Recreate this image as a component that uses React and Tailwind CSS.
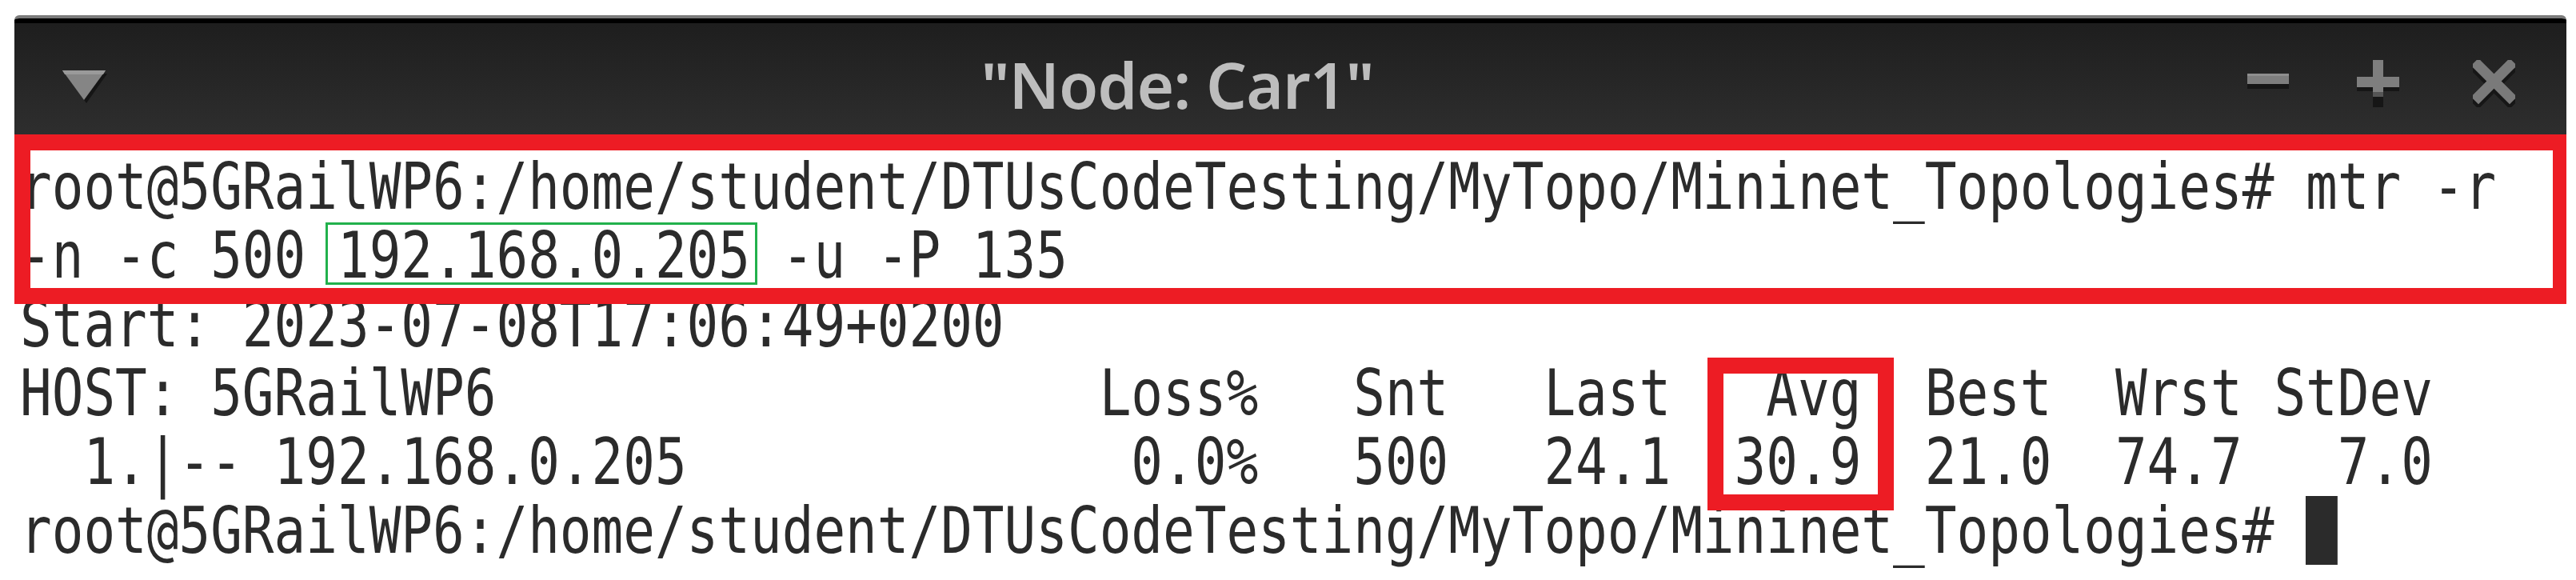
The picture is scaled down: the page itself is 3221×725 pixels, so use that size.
import React from 'react';

const prompt = 'root@5GRailWP6:/home/student/DTUsCodeTesting/MyTopo/Mininet_Topologies#';

const lines = [
  `${prompt} mtr -r`,
  '-n -c 500 192.168.0.205 -u -P 135',
  'Start: 2023-07-08T17:06:49+0200',
  'HOST: 5GRailWP6'.padEnd(34) + 'Loss%   Snt   Last   Avg  Best  Wrst StDev',
  '  1.|-- 192.168.0.205'.padEnd(35) + '0.0%   500   24.1  30.9  21.0  74.7   7.0',
];

const MenuArrow = () => (
  <svg width="56" height="41" viewBox="0 0 56 41" className="mt-[8px]">
    <polygon points="4,4 56,4 30,41" fill="#151515" />
    <polygon points="0,0 54,0 27,37" fill="#858585" />
    <polygon points="0,0 54,0 51,5 3,5" fill="#9a9a9a" />
  </svg>
);

const Minimize = () => (
  <svg width="52" height="19" viewBox="0 0 52 19" className="mt-[-6px]">
    <rect x="0" y="0" width="52" height="13" fill="#7e7e7e" />
    <rect x="0" y="0" width="52" height="3" fill="#8e8e8e" />
    <rect x="0" y="13" width="52" height="6" fill="#161616" />
  </svg>
);

const Maximize = () => (
  <svg width="53" height="59" viewBox="0 0 53 59">
    <rect x="0" y="34" width="53" height="5" fill="#161616" />
    <rect x="20" y="46" width="13" height="13" fill="#161616" />
    <rect x="0" y="21" width="53" height="13" fill="#7e7e7e" />
    <rect x="20" y="0" width="13" height="46" fill="#7e7e7e" />
    <rect x="20" y="40" width="13" height="6" fill="#555" />
  </svg>
);

const Close = () => (
  <svg width="53" height="59" viewBox="0 0 53 59">
    <g stroke="#161616" strokeWidth="13" strokeLinecap="square">
      <line x1="7" y1="13" x2="46" y2="52" />
      <line x1="46" y1="13" x2="7" y2="52" />
    </g>
    <g stroke="#7a7a7a" strokeWidth="13" strokeLinecap="square">
      <line x1="7" y1="7" x2="46" y2="46" />
      <line x1="46" y1="7" x2="7" y2="46" />
    </g>
  </svg>
);

export default function App() {
  return (
    <div className="w-[3221px] h-[725px] overflow-hidden bg-white pt-[19px] pl-[18px]">
      <div className="w-[3191px] h-[706px] flex flex-col">
        {/* title bar */}
        <div className="rounded-t-[6px] overflow-hidden border-t-[4px] border-[#7b7b7b]">
          <div className="h-[6px] bg-black" />
          <div className="h-[139px] bg-gradient-to-b from-[#1e1e1e] to-[#2e2e2e] flex items-center pt-[12px] pl-[60px] pr-[64px]">
            <MenuArrow />
            <div className="flex-1 text-center font-['Noto_Sans',sans-serif] font-semibold text-[80px] leading-[80px] text-[#bdbdbd] tracking-[-1px]">
              "Node: Car1"
            </div>
            <div className="flex items-center">
              <Minimize />
              <div className="ml-[85px]"><Maximize /></div>
              <div className="ml-[92px]"><Close /></div>
            </div>
          </div>
        </div>

        {/* terminal */}
        <div className="relative flex-1 bg-white overflow-hidden pt-[22px] pl-[7px]">
          <div className="origin-top-left scale-x-[0.814] whitespace-pre font-['DejaVu_Sans_Mono',monospace] text-[81px] leading-[86px] text-[#2b2b2b]">
            {lines.map((l, i) => (
              <div key={i}>{l}</div>
            ))}
            <div>
              {prompt + ' '}
              <span className="inline-block w-[1ch] h-[86px] align-top bg-[#2b2b2b]" />
            </div>
          </div>

          {/* annotations */}
          <div className="absolute left-0 top-0 w-[3191px] h-[212px] border-[20px] border-r-[17px] border-[#ed1c24]" />
          <div className="absolute left-[389px] top-[110px] w-[540px] h-[78px] border-[3px] border-[#22b14c]" />
          <div className="absolute left-[2117px] top-[279px] w-[233px] h-[191px] border-[20px] border-[#ed1c24]" />
        </div>
      </div>
    </div>
  );
}
